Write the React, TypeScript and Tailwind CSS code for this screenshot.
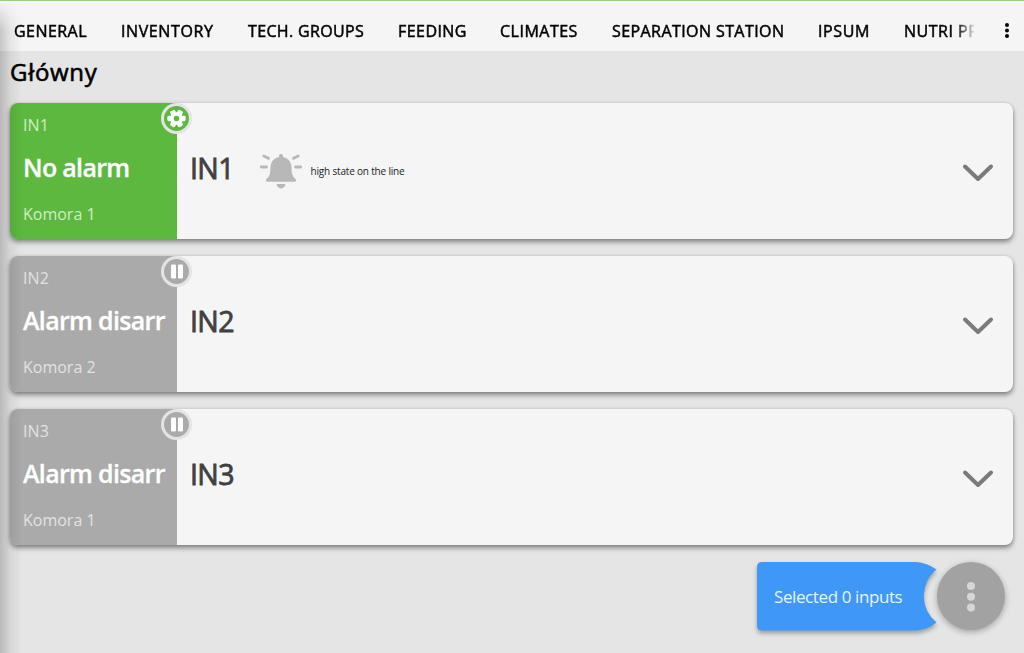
type Input = { name: string; status: string; chamber: string; active: boolean; note?: string };

const inputs: Input[] = [
  { name: "IN1", status: "No alarm", chamber: "Komora 1", active: true, note: "high state on the line" },
  { name: "IN2", status: "Alarm disarr", chamber: "Komora 2", active: false },
  { name: "IN3", status: "Alarm disarr", chamber: "Komora 1", active: false },
];

const tabs = [
  { label: "GENERAL", cls: "w-[107px] tracking-[0.45px]" },
  { label: "INVENTORY", cls: "w-[127px] tracking-[0.6px]" },
  { label: "TECH. GROUPS", cls: "w-[150px] tracking-[0.35px]" },
  { label: "FEEDING", cls: "w-[102px] tracking-[0.45px]" },
  { label: "CLIMATES", cls: "w-[112px] tracking-[0.5px]" },
  { label: "SEPARATION STATION", cls: "w-[206px] tracking-[0.42px]" },
  { label: "IPSUM", cls: "w-[86px] tracking-[0.6px]" },
  { label: "NUTRI PR", cls: "w-[107px] tracking-[0.5px]" },
];

function Gear() {
  return (
    <svg viewBox="-10 -10 20 20" className="h-[19px] w-[19px] shrink-0">
      <g fill="#fff">
        <circle r="6.600" />
        {[0, 60, 120].map((a) => (
          <rect key={a} x="-2.900" y="-9.600" width="5.800" height="19.200" rx="1.500" transform={`rotate(${a + 30})`} />
        ))}
      </g>
      <circle r="2.900" fill="#5db83f" />
    </svg>
  );
}

function Pause() {
  return (
    <svg viewBox="0 0 20 20" className="h-5 w-5 shrink-0" fill="#fff">
      <rect x="4" y="2.500" width="5" height="14" rx="1.200" />
      <rect x="11" y="2.500" width="5" height="14" rx="1.200" />
    </svg>
  );
}

function Bell() {
  return (
    <svg viewBox="0 0 44 36" className="h-9 w-11" fill="#b8b8b8">
      <path d="M22 1a2 2 0 0 1 2 2v1c5 1 8.500 5 8.500 10.500 0 6 1 9 4 11.500 1.200 1.200.8 2.800-1 2.800H8.500c-1.800 0-2.200-1.600-1-2.800 3-2.500 4-5.500 4-11.500C11.500 9 15 5 20 4V3a2 2 0 0 1 2-2z" />
      <path d="M17.600 31h8.800a4.400 4.400 0 0 1-8.800 0z" />
      <path d="M4.800 3 9.500 5.300M39.200 3l-4.700 2.300M2.300 14h5.200M36.500 14h5.200" stroke="#b8b8b8" strokeWidth="2.800" strokeLinecap="round" />
    </svg>
  );
}

function Card({ item }: { item: Input }) {
  return (
    <section className="relative flex h-[136px] w-[1003px] rounded-lg bg-[#f5f5f5] shadow-[0_3px_5px_rgba(0,0,0,0.42),0_0_3px_rgba(0,0,0,0.12)]">
      <div className={`flex w-[167px] flex-col rounded-l-lg pl-[13px] ${item.active ? "bg-[#5db83f] text-[#d0edc6]" : "bg-[#aaa] text-[#e2e2e2]"}`}>
        <div className="mt-[10px] h-6 text-[16px] leading-6 tracking-[0.1px]">{item.name}</div>
        <div className="mt-[13px] h-[34px] whitespace-nowrap text-[25px] leading-[34px] font-semibold tracking-[-0.680px] text-white [-webkit-text-stroke:0.300px_#fff]">
          {item.status}
        </div>
        <div className="mt-[18px] h-6 text-[16px] leading-6">{item.chamber}</div>
      </div>
      <div className="flex flex-1 items-center pl-[13px]">
        <h2 className="w-[69px] pb-[7px] text-[28.500px] leading-[38px] tracking-[-0.6px] text-[#404040] [-webkit-text-stroke:0.800px_#404040]">{item.name}</h2>
        {item.note && (
          <>
            <div className="pb-[1px]"><Bell /></div>
            <span className="ml-[7.500px] text-[10px] leading-4 tracking-[-0.18px] text-[#222]">{item.note}</span>
          </>
        )}
        <svg viewBox="0 0 32 20" className="mr-[19px] mt-[4px] ml-auto h-5 w-8" fill="none" stroke="#7b7b7b" strokeWidth="4" strokeLinecap="round" strokeLinejoin="round">
          <path d="M3 3.500 16 16 29 3.500" />
        </svg>
      </div>
      <div className={`absolute top-0 left-[151px] flex h-[31px] w-[31px] items-center justify-center rounded-full border-3 border-[#e4e4e4] ${item.active ? "bg-[#5db83f]" : "bg-[#aaa]"}`}>
        {item.active ? <Gear /> : <Pause />}
      </div>
    </section>
  );
}

export default function App() {
  return (
    <div className="relative h-[653px] w-[1024px] overflow-hidden bg-[#e5e5e5] font-['Open_Sans','Noto_Sans',sans-serif] text-black">
      <div className="h-px bg-[#93d07e]" />
      <header className="flex h-[50px] items-center bg-[#f5f5f5] pt-[10px] pl-[14px]">
        <nav className="flex w-[960px] overflow-hidden [mask-image:linear-gradient(to_right,#000_942px,transparent_962px)]">
          {tabs.map((t) => (
            <a key={t.label} className={`shrink-0 whitespace-nowrap text-[16px] leading-6 [-webkit-text-stroke:0.500px_#000] ${t.cls}`}>{t.label}</a>
          ))}
        </nav>
        <svg viewBox="0 0 6 18" className="ml-[30px] h-[18px] w-[6px]">
          <circle cx="3" cy="3" r="2" /><circle cx="3" cy="8.500" r="2" /><circle cx="3" cy="14" r="2" />
        </svg>
      </header>
      <main className="pl-[10px]">
        <h1 className="h-[52px] pt-[5px] text-[24px] leading-8 tracking-[0.7px] [-webkit-text-stroke:0.600px_#000]">Główny</h1>
        <div className="flex flex-col gap-[17.200px]">
          {inputs.map((i) => <Card key={i.name} item={i} />)}
        </div>
        <div className="mt-[15.600px] ml-[747px] flex h-[70px]">
          <button className="grid h-[70px] w-[180px] text-left [&>*]:col-start-1 [&>*]:row-start-1">
            <svg viewBox="0 0 180 70" className="h-[70px] w-[180px] overflow-visible drop-shadow-[0_3px_2px_rgba(0,0,0,0.3)]">
              <path fill="#3f98f7" d="M5 1H159Q170 1.500 179.500 8.500A34 34 0 0 0 179.500 61.500Q170 69 159 69.500H5Q0 69.500 0 64.500V6Q0 1 5 1Z" />
            </svg>
            <span className="relative self-center pl-[17px] pt-[3px] text-[17px] leading-6 tracking-[-0.400px] whitespace-nowrap text-[#eaf4ff]">Selected 0 inputs</span>
          </button>
          <button className="mt-px flex h-[68px] w-[68px] items-center justify-center rounded-full bg-[#a2a2a2] shadow-[0_2px_6px_rgba(0,0,0,0.3)]">
            <svg viewBox="0 0 10 32" className="mt-[3px] h-8 w-[10px]" fill="#d6d6d6">
              <circle cx="5" cy="5" r="4" /><circle cx="5" cy="15.700" r="4" /><circle cx="5" cy="26.400" r="4" />
            </svg>
          </button>
        </div>
      </main>
      <div className="pointer-events-none absolute top-[1px] bottom-0 left-0 w-[22px] bg-[linear-gradient(to_right,rgba(0,0,0,0.19),rgba(0,0,0,0.06)_50%,transparent)] [mask-image:linear-gradient(to_bottom,transparent,#000_30px)]" />
    </div>
  );
}
